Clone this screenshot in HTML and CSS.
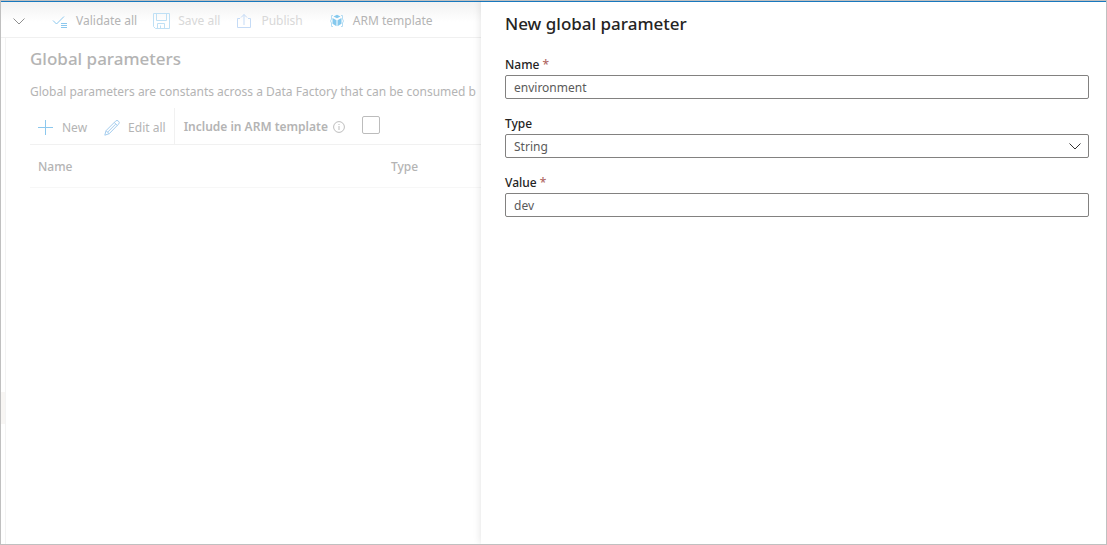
FILE: index.html
```html
<!DOCTYPE html>
<html lang="en">
<head>
<meta charset="utf-8">
<title>Global parameters</title>
<link rel="stylesheet" href="styles.css">
</head>
<body>
<div class="frame">
  <div class="page">
    <header class="toolbar">
      <button class="tool tool-menu" type="button" aria-label="Expand">
        <svg width="14" height="14" viewBox="0 0 14 14"><path d="M1.500 4.500 7 10 12.500 4.500" stroke="#8f8f8f"/></svg>
      </button>
      <button class="tool tool-validate" type="button">
        <svg width="16" height="16" viewBox="0 0 16 16"><path d="M1 7.500 4.500 11 12 3.500M9 10.500h6M9 12.500h6M9 14.500h6" stroke="#8cc8ee"/></svg>
        Validate all
      </button>
      <button class="tool tool-save" type="button" disabled>
        <svg width="17" height="16" viewBox="0 0 17 16"><path d="M.5.5h16v15H2.500L.5 13.500zM3.500.5v7h10v-7M4.500 15.500v-5h7v5M7.500 12.500v3" stroke="#bfe0f5"/></svg>
        Save all
      </button>
      <button class="tool tool-publish" type="button" disabled>
        <svg width="16" height="16" viewBox="0 0 16 16"><path d="M4 5.500H1.500v9h13v-9H12M8 12V1.500M5 4.500l3-3 3 3" stroke="#c5dbf6"/></svg>
        Publish
      </button>
      <button class="tool tool-arm" type="button">
        <svg width="16" height="16" viewBox="0 0 16 16"><path d="M4 2.500H2.500v3.500L1.500 8l1 2v3.500H4M12 2.500h1.500v3.500L14.500 8l-1 2v3.500H12" stroke="#b4dcf3"/><path d="M8 1.800 11.500 3.500 8 5.300 4.500 3.500zM3.500 5 7.500 7.200v6L3.500 10.800zM12.500 5 8.500 7.200v6l4-2.400z" fill="#85c9ee"/></svg>
        ARM template
      </button>
    </header>
    <div class="workspace">
      <div class="rail"><div class="rail-handle"></div></div>
      <main class="content">
        <h1>Global parameters</h1>
        <p class="intro">Global parameters are constants across a Data Factory that can be consumed b</p>
        <div class="commands">
          <button class="command" type="button">
            <svg width="16" height="16" viewBox="0 0 16 16"><path d="M7.500 0v15M0 7.500h15" stroke="#8cc8ee"/></svg>
            New
          </button>
          <button class="command command-edit" type="button">
            <svg width="16" height="16" viewBox="0 0 16 16"><path d="M.8 15.200 2 10.700 11.500 1.200a2 2 0 0 1 3 0 2 2 0 0 1 0 3L5.200 13.700zM2 10.700l3.200 3M10.200 2.500l3.200 3M3.600 12.200l8-8" stroke="#a3ccee"/></svg>
            Edit all
          </button>
          <label class="include" for="include-arm">Include in ARM template
            <svg width="12" height="12" viewBox="0 0 12 12"><circle cx="6" cy="6" r="5.400" stroke="#bdbdbd"/><path d="M6 5v4M6 3v1" stroke="#bdbdbd"/></svg>
          </label>
          <input class="check" type="checkbox" id="include-arm">
        </div>
        <table class="params">
          <thead><tr><th class="col-name" scope="col">Name</th><th scope="col">Type</th></tr></thead>
        </table>
      </main>
    </div>
  </div>
  <form class="panel">
    <h2>New global parameter</h2>
    <div class="field">
      <label for="name">Name <span class="required">*</span></label>
      <input class="box" id="name" type="text" value="environment">
    </div>
    <div class="field">
      <label for="type">Type</label>
      <div class="select">
        <select class="box" id="type"><option>String</option></select>
        <svg class="chevron" width="14" height="14" viewBox="0 0 14 14"><path d="M1.500 4.500 7 10 12.500 4.500" stroke="#333"/></svg>
      </div>
    </div>
    <div class="field">
      <label for="value">Value <span class="required">*</span></label>
      <input class="box" id="value" type="text" value="dev">
    </div>
  </form>
</div>
</body>
</html>
```
FILE: styles.css
```css
* { box-sizing: border-box; }
body {
  margin: 0;
  font-family: "Noto Sans", "Open Sans", sans-serif;
  font-size: 12px;
  line-height: 16px;
  color: #b4b4b4;
  background: #fff;
}
svg { display: block; fill: none; flex: none; }
button, input, select { font: inherit; }
button { padding: 0; border: 0; background: none; color: inherit; }
h1, h2, p { margin: 0; }

.frame {
  display: grid;
  grid-template-columns: minmax(0, 480fr) minmax(0, 625fr);
  min-height: 100vh;
  border: 1px solid #c0c0c0;
  overflow: hidden;
}
.page {
  display: flex;
  flex-direction: column;
  min-width: 0;
  overflow: hidden;
  border-top: 1px solid #1878be;
}
.toolbar {
  display: flex;
  align-items: center;
  height: 36px;
  padding: 2px 0 0 11px;
  border-bottom: 1px solid #f0f0f0;
  background: linear-gradient(#f2f2f2, #fff 20px);
}
.tool { display: flex; align-items: center; gap: 8px; white-space: nowrap; }
.tool:disabled { color: #d8d8d8; }
.tool-validate { margin-left: 26px; }
.tool-save { margin-left: 16px; }
.tool-publish { margin-left: 16px; gap: 9px; }
.tool-arm { margin-left: 26px; }

.workspace { display: flex; flex: 1; }
.rail { flex: none; width: 5px; border-right: 1px solid #f3f3f3; }
.rail-handle { height: 32px; margin-top: 354px; background: #f8f6f4; }
.content { flex: 1; min-width: 0; padding: 9px 0 0 24px; }
h1 { font-size: 17px; line-height: 24px; font-weight: 500; }
.intro { margin-top: 13px; white-space: nowrap; }
.commands {
  display: flex;
  align-items: stretch;
  height: 37px;
  margin-top: 8px;
  padding-left: 8px;
  border-bottom: 1px solid #f1f1f1;
}
.command { display: flex; align-items: center; gap: 8px; padding-top: 4px; }
.command-edit { margin-left: 17px; padding-right: 8px; border-right: 1px solid #f1f1f1; }
.include { display: flex; align-items: center; gap: 5px; margin-left: 9px; padding-top: 1px; font-weight: 600; white-space: nowrap; }
.check {
  appearance: none;
  align-self: center;
  flex: none;
  width: 18px;
  height: 18px;
  margin: 0 0 2px 17px;
  border: 1px solid #bcbcbc;
  border-radius: 2px;
}
.params { width: 100%; border-collapse: collapse; }
.params th { height: 42px; padding: 2px 0 0; text-align: left; font-weight: 500; border-bottom: 1px solid #f7f7f7; }
.params .col-name { width: 361px; padding-left: 8px; }

.panel {
  min-width: 0;
  padding: 10px 17px 0 24px;
  border-top: 1px solid #1878be;
  color: #252423;
  box-shadow: 0 0 8px rgba(0, 0, 0, 0.12);
  background: #fff;
  clip-path: inset(0 0 0 -12px);
}
h2 { margin-bottom: 21px; font-size: 17px; line-height: 24px; font-weight: 500; }
.field { margin-bottom: 17px; }
.field label { display: block; height: 18px; font-weight: 500; }
.required { color: #b06864; }
.box {
  display: block;
  appearance: none;
  width: 100%;
  height: 24px;
  padding: 0 8px;
  border: 1px solid #828180;
  border-radius: 2px;
  background: #fff;
  color: #5a5a5a;
}
.select { position: relative; }
.select .box { padding-top: 2px; }
.chevron { position: absolute; top: 5px; right: 7px; pointer-events: none; }
```
